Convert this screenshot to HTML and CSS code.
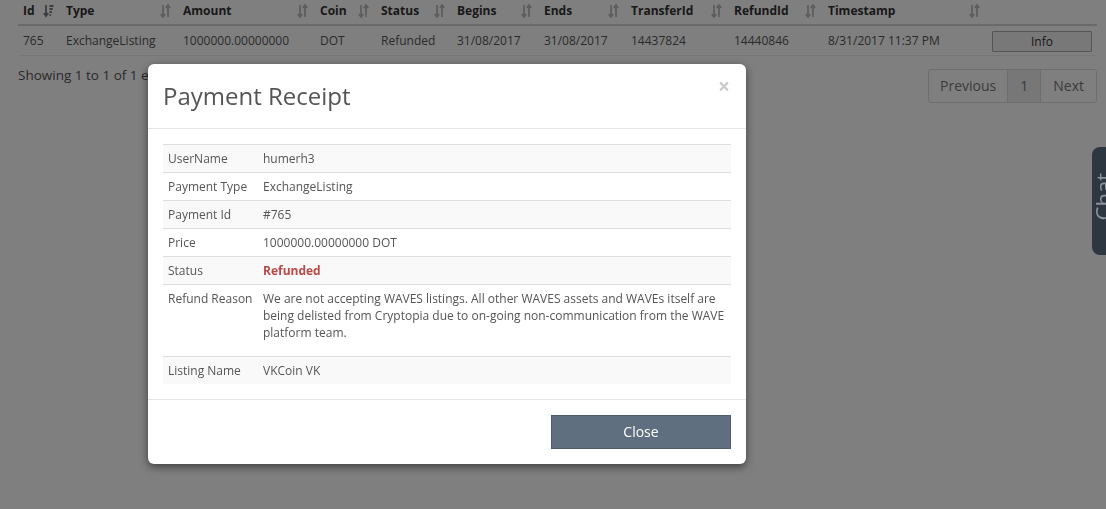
FILE: index.html
```html
<!DOCTYPE html>
<html>
<head>
<meta charset="utf-8">
<link rel="stylesheet" href="styles.css">
</head>
<body>
<div class="page">
  <table class="grid">
    <thead>
      <tr>
        <th class="c-id">Id<svg class="sort on" viewBox="0 0 11 14"><path d="M3 1v11M0.8 9l2.2 3 2.2-3" /><path d="M6.5 2h4M6.5 5h3.2M6.5 8h2.4M6.5 11h1.4" /></svg></th>
        <th class="c-type">Type<svg class="sort" viewBox="0 0 11 14"><path d="M3 1v12M0.8 10l2.2 3 2.2-3M8 13V1M5.8 4l2.2-3 2.2 3" /></svg></th>
        <th class="c-amount">Amount<svg class="sort" viewBox="0 0 11 14"><path d="M3 1v12M0.8 10l2.2 3 2.2-3M8 13V1M5.8 4l2.2-3 2.2 3" /></svg></th>
        <th class="c-coin">Coin<svg class="sort" viewBox="0 0 11 14"><path d="M3 1v12M0.8 10l2.2 3 2.2-3M8 13V1M5.8 4l2.2-3 2.2 3" /></svg></th>
        <th class="c-status">Status<svg class="sort" viewBox="0 0 11 14"><path d="M3 1v12M0.8 10l2.2 3 2.2-3M8 13V1M5.8 4l2.2-3 2.2 3" /></svg></th>
        <th class="c-begins">Begins<svg class="sort" viewBox="0 0 11 14"><path d="M3 1v12M0.8 10l2.2 3 2.2-3M8 13V1M5.8 4l2.2-3 2.2 3" /></svg></th>
        <th class="c-ends">Ends<svg class="sort" viewBox="0 0 11 14"><path d="M3 1v12M0.8 10l2.2 3 2.2-3M8 13V1M5.8 4l2.2-3 2.2 3" /></svg></th>
        <th class="c-transfer">TransferId<svg class="sort" viewBox="0 0 11 14"><path d="M3 1v12M0.8 10l2.2 3 2.2-3M8 13V1M5.8 4l2.2-3 2.2 3" /></svg></th>
        <th class="c-refund">RefundId<svg class="sort" viewBox="0 0 11 14"><path d="M3 1v12M0.8 10l2.2 3 2.2-3M8 13V1M5.8 4l2.2-3 2.2 3" /></svg></th>
        <th class="c-ts">Timestamp<svg class="sort" viewBox="0 0 11 14"><path d="M3 1v12M0.8 10l2.2 3 2.2-3M8 13V1M5.8 4l2.2-3 2.2 3" /></svg></th>
        <th class="c-info"></th>
      </tr>
    </thead>
    <tbody>
      <tr>
        <td>765</td>
        <td>ExchangeListing</td>
        <td>1000000.00000000</td>
        <td>DOT</td>
        <td>Refunded</td>
        <td>31/08/2017</td>
        <td>31/08/2017</td>
        <td>14437824</td>
        <td>14440846</td>
        <td>8/31/2017 11:37 PM</td>
        <td><button class="info-btn">Info</button></td>
      </tr>
    </tbody>
  </table>
  <div class="footer-row">
    <div class="showing">Showing 1 to 1 of 1 entries</div>
    <div class="pager">
      <span class="pg">Previous</span>
      <span class="pg cur">1</span>
      <span class="pg">Next</span>
    </div>
  </div>
</div>

<div class="backdrop"></div>

<div class="chat-tab"><span>Chat</span></div>

<div class="modal">
  <div class="modal-header">
    <h4 class="modal-title">Payment Receipt</h4>
    <span class="modal-x">&times;</span>
  </div>
  <div class="modal-body">
    <table class="receipt">
      <tr class="odd"><td class="lbl">UserName</td><td>humerh3</td></tr>
      <tr><td class="lbl">Payment Type</td><td>ExchangeListing</td></tr>
      <tr class="odd"><td class="lbl">Payment Id</td><td>#765</td></tr>
      <tr><td class="lbl">Price</td><td>1000000.00000000 DOT</td></tr>
      <tr class="odd"><td class="lbl">Status</td><td class="refunded">Refunded</td></tr>
      <tr><td class="lbl">Refund Reason</td><td class="reason">We are not accepting WAVES listings. All other WAVES assets and WAVEs itself are being delisted from Cryptopia due to on-going non-communication from the WAVE platform team.</td></tr>
      <tr class="odd"><td class="lbl">Listing Name</td><td>VKCoin VK</td></tr>
    </table>
  </div>
  <div class="modal-footer">
    <button class="close-btn">Close</button>
  </div>
</div>
</body>
</html>
```

FILE: styles.css
```css
html, body {
  margin: 0;
  padding: 0;
  background: #fff;
  font-family: "Open Sans", "Liberation Sans", sans-serif;
  font-size: 13px;
  color: #555;
  overflow: hidden;
  height: 509px;
}

.page {
  padding: 0 9px 0 18px;
}

.grid {
  width: 1079px;
  border-collapse: collapse;
  table-layout: fixed;
}

.grid th {
  position: relative;
  text-align: left;
  font-weight: 700;
  font-size: 12px;
  color: #333;
  height: 20px;
  padding: 1px 5px 3px;
  line-height: 20px;
  border-bottom: 2px solid #d4d4d4;
  vertical-align: top;
}

.grid th .sort {
  position: absolute;
  right: 7px;
  top: 4px;
  width: 11px;
  height: 14px;
  fill: none;
  stroke: #bdbdbd;
  stroke-width: 1.8;
}

.grid th .sort.on {
  stroke: #7a7a7a;
}

.c-id { width: 33px; }
.c-type { width: 107px; }
.c-amount { width: 127px; }
.c-coin { width: 51px; }
.c-status { width: 66px; }
.c-begins { width: 77px; }
.c-ends { width: 77px; }
.c-transfer { width: 93px; }
.c-refund { width: 84px; }
.c-ts { width: 154px; }
.c-info { width: 100px; }

.grid td {
  padding: 0 5px;
  height: 29px;
  line-height: 28px;
  font-size: 12px;
  color: #555;
  border-bottom: 1px solid #eee;
  white-space: nowrap;
}

.info-btn {
  display: block;
  width: 100px;
  height: 21px;
  margin-top: 1px;
  padding: 0;
  font-family: "Open Sans", "Liberation Sans", sans-serif;
  font-size: 12px;
  color: #333;
  background: #f0f0f0;
  border: 1px solid #aaa;
  border-radius: 1px;
}

.footer-row {
  display: flex;
  justify-content: space-between;
  align-items: flex-start;
  padding-top: 9px;
}

.showing {
  color: #555;
  font-size: 13.5px;
  line-height: 20px;
}

.pager {
  display: flex;
  margin-top: 4px;
  border: 1px solid #ddd;
  border-radius: 3px;
}

.pg {
  display: block;
  padding: 0 12px;
  line-height: 32px;
  height: 32px;
  color: #777;
  font-size: 14px;
  border-left: 1px solid #ddd;
}

.pg:first-child { padding: 0 11px; border-left: 0; }

.pg.cur {
  background: #eee;
  padding: 0 12px;
}

.backdrop {
  position: fixed;
  inset: 0;
  background: rgba(0, 0, 0, 0.5);
}

.chat-tab {
  position: fixed;
  right: -20px;
  top: 147px;
  width: 34px;
  height: 108px;
  background: #2e3741;
  border-radius: 8px 0 0 8px;
  overflow: hidden;
}

.chat-tab span {
  position: absolute;
  left: -2px;
  top: 26px;
  writing-mode: vertical-rl;
  transform: rotate(180deg);
  font-size: 22px;
  line-height: 26px;
  color: #8b929a;
}

.modal {
  position: absolute;
  left: 148px;
  top: 64px;
  width: 598px;
  background: #fff;
  border-radius: 6px;
  box-shadow: 0 3px 9px rgba(0, 0, 0, 0.5);
}

.modal-header {
  position: relative;
  height: 64px;
  border-bottom: 1px solid #e5e5e5;
  padding: 0 15px;
}

.modal-title {
  margin: 0;
  font-weight: 400;
  font-size: 24px;
  line-height: 64px;
  color: #555;
}

.modal-x {
  position: absolute;
  right: 16px;
  top: 10px;
  font-size: 21px;
  font-weight: 700;
  color: #ccc;
  line-height: 24px;
}

.modal-body {
  padding: 15px 15px 15px;
}

.receipt {
  width: 100%;
  border-collapse: collapse;
  font-size: 12px;
  color: #555;
}

.receipt td {
  border-top: 1px solid #ddd;
  padding: 5px 5px;
  line-height: 17px;
  vertical-align: top;
  height: 17px;
}

.receipt tr.odd td {
  background: #f9f9f9;
}

.receipt td.lbl {
  width: 85px;
  white-space: nowrap;
}

.receipt td.refunded {
  color: #b94a48;
  font-weight: 700;
}

.receipt td.reason {
  padding-bottom: 15px;
}

.modal-footer {
  border-top: 1px solid #e5e5e5;
  padding: 15px 15px 15px;
  display: flex;
  justify-content: flex-end;
}

.close-btn {
  width: 180px;
  height: 34px;
  background: #5f6f7f;
  border: 1px solid #4f5d6b;
  color: #fff;
  font-family: "Open Sans", "Liberation Sans", sans-serif;
  font-size: 14px;
  border-radius: 0;
  padding-bottom: 2px;
}
```
